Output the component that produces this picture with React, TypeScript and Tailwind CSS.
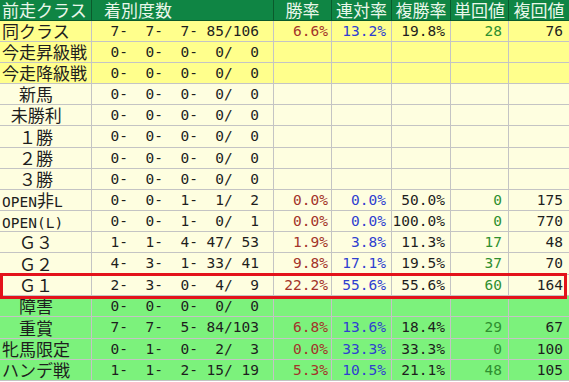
import React from 'react';

type Tone = 'yellow' | 'cream' | 'green';

interface Row {
  label: string;
  tone: Tone;
  counts: [number, number, number, number, number];
  stats?: [string, string, string, string, string];
}

const rows: Row[] = [
  { label: '同クラス', tone: 'yellow', counts: [7, 7, 7, 85, 106], stats: ['6.6%', '13.2%', '19.8%', '28', '76'] },
  { label: '今走昇級戦', tone: 'yellow', counts: [0, 0, 0, 0, 0] },
  { label: '今走降級戦', tone: 'yellow', counts: [0, 0, 0, 0, 0] },
  { label: '　新馬', tone: 'cream', counts: [0, 0, 0, 0, 0] },
  { label: ' 未勝利', tone: 'cream', counts: [0, 0, 0, 0, 0] },
  { label: '　１勝', tone: 'cream', counts: [0, 0, 0, 0, 0] },
  { label: '　２勝', tone: 'cream', counts: [0, 0, 0, 0, 0] },
  { label: '　３勝', tone: 'cream', counts: [0, 0, 0, 0, 0] },
  { label: 'OPEN非L', tone: 'cream', counts: [0, 0, 1, 1, 2], stats: ['0.0%', '0.0%', '50.0%', '0', '175'] },
  { label: 'OPEN(L)', tone: 'cream', counts: [0, 0, 1, 0, 1], stats: ['0.0%', '0.0%', '100.0%', '0', '770'] },
  { label: '　Ｇ３', tone: 'cream', counts: [1, 1, 4, 47, 53], stats: ['1.9%', '3.8%', '11.3%', '17', '48'] },
  { label: '　Ｇ２', tone: 'cream', counts: [4, 3, 1, 33, 41], stats: ['9.8%', '17.1%', '19.5%', '37', '70'] },
  { label: '　Ｇ１', tone: 'cream', counts: [2, 3, 0, 4, 9], stats: ['22.2%', '55.6%', '55.6%', '60', '164'] },
  { label: '　障害', tone: 'green', counts: [0, 0, 0, 0, 0] },
  { label: '　重賞', tone: 'green', counts: [7, 7, 5, 84, 103], stats: ['6.8%', '13.6%', '18.4%', '29', '67'] },
  { label: '牝馬限定', tone: 'green', counts: [0, 1, 0, 2, 3], stats: ['0.0%', '33.3%', '33.3%', '0', '100'] },
  { label: 'ハンデ戦', tone: 'green', counts: [1, 1, 2, 15, 19], stats: ['5.3%', '10.5%', '21.1%', '48', '105'] },
];

// a few rows are 1px taller so the grid lines land where the sheet has them
const tall = [5, 11, 14, 17];

const pad = (n: number, w: number) => String(n).padStart(w, ' ');

const countText = (c: Row['counts']) =>
  `${pad(c[0], 2)}-${pad(c[1], 3)}-${pad(c[2], 3)}-${pad(c[3], 3)}/${pad(c[4], 3)}`;

const toneBg: Record<Tone, string> = {
  yellow: 'bg-[#ffff8c]',
  cream: 'bg-[#fefee0]',
  green: 'bg-[#7cf27c]',
};

const mono = { fontFamily: '"DejaVu Sans Mono", "Liberation Mono", monospace' };
const jp = { fontFamily: '"Noto Sans CJK JP", "DejaVu Sans Mono", sans-serif' };

const Label: React.FC<{ text: string }> = ({ text }) => (
  <>
    {text.split(/([\x20-\x7e]+)/).map((part, i) =>
      /^[\x20-\x7e]+$/.test(part) ? (
        <span key={i} style={mono} className="text-[14.5px]">
          {part}
        </span>
      ) : (
        <span key={i}>{part}</span>
      )
    )}
  </>
);

const headers = ['勝率', '連対率', '複勝率', '単回値', '複回値'];
const statColors = ['text-[#a3342a]', 'text-[#2f3fd0]', 'text-[#1e1e1e]', 'text-[#2f8f2f]', 'text-[#1e1e1e]'];
const statPad = ['pr-[3px]', 'pr-[5px]', 'pr-[5px]', 'pr-[6px]', 'pr-[6px]'];
const widths = ['w-[58px]', 'w-[60px]', 'w-[59px]', 'w-[58px]', 'w-[60px]'];

const App: React.FC = () => {
  return (
    <div className="relative w-[569px] h-[382px] overflow-hidden bg-white text-[#1e1e1e]" style={jp}>
      <div className="flex h-[21px] bg-[#0f8544] text-[#eaf7ea] text-[17px] leading-[20px] border-b border-[#0a5a2c]">
        <div className="w-[92px] pl-[2px] border-r border-[#0a5a2c] whitespace-nowrap">前走クラス</div>
        <div className="w-[182px] pl-[12px] border-r border-[#0a5a2c]">着別度数</div>
        {headers.map((h, i) => (
          <div key={h} className={`${widths[i]} text-center border-r border-[#0a5a2c] last:border-r-0`}>
            {h}
          </div>
        ))}
      </div>

      {rows.map((row, r) => (
        <div
          key={row.label}
          className={`flex ${tall.includes(r) ? 'h-[22px] leading-[21px]' : 'h-[21px] leading-[20px]'} ${toneBg[row.tone]} border-b border-[#c4c4c4]`}
        >
          <div className="w-[92px] pl-[2px] text-[17px] whitespace-pre border-r border-[#c4c4c4]">
            <Label text={row.label} />
          </div>
          <div
            className="w-[182px] text-right pr-[14px] text-[14.5px] whitespace-pre border-r border-[#c4c4c4]"
            style={mono}
          >
            {countText(row.counts)}
          </div>
          {widths.map((w, i) => (
            <div
              key={i}
              className={`${w} text-right ${statPad[i]} ${statColors[i]} text-[14.5px] whitespace-pre border-r border-[#c4c4c4] last:border-r-0`}
              style={mono}
            >
              {row.stats ? row.stats[i] : ''}
            </div>
          ))}
        </div>
      ))}

      <div className="absolute left-0 top-[273px] w-[567px] h-[26px] border-[3px] border-[#e3121b] pointer-events-none" />
    </div>
  );
};

export default App;
